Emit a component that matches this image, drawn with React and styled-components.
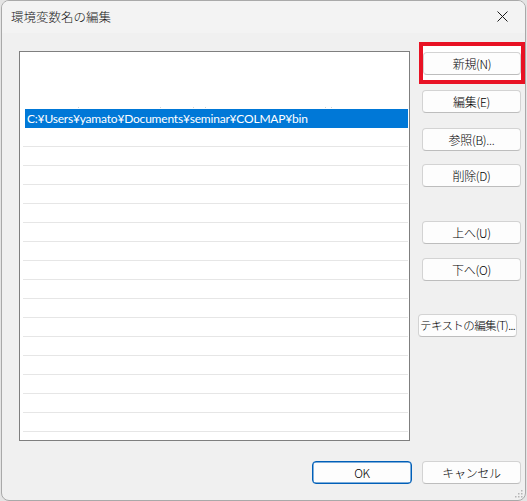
import styled, { createGlobalStyle } from 'styled-components'

const GlobalStyle = createGlobalStyle`
  html, body {
    margin: 0;
    padding: 0;
    background: #e4e4e4;
  }
  body {
    font-family: 'Noto Sans CJK JP', 'Noto Sans', sans-serif;
    font-size: 12px;
    color: #1a1a1a;
  }
`

const Window = styled.div`
  box-sizing: border-box;
  width: 525px;
  height: 501px;
  margin-left: 1px;
  border: 1px solid #a9a9a9;
  border-radius: 8px;
  background: #f0f0f0;
  overflow: hidden;
  display: flex;
  flex-direction: column;
  position: relative;
`

const TitleBar = styled.div`
  height: 31px;
  display: flex;
  align-items: center;
  justify-content: space-between;
  padding: 0 9px 1px 9px;
  background: #f3f3f3;
`

const Title = styled.span`
  font-size: 12.5px;
  font-weight: 300;
  color: #1a1a1a;
`

const CloseButton = styled.div`
  width: 20px;
  height: 20px;
  display: flex;
  align-items: center;
  justify-content: center;
  margin-right: 4px;
`

const Body = styled.div`
  flex: 1;
  display: flex;
  flex-direction: column;
  padding: 18px 0 0 17px;
`

const Main = styled.div`
  display: flex;
  gap: 12px;
`

const ListBox = styled.div`
  box-sizing: border-box;
  width: 392px;
  height: 390px;
  border: 1px solid #7f7f7f;
  background: #ffffff;
  overflow: hidden;
  display: flex;
  flex-direction: column;
`

const Spacer = styled.div`
  height: ${(p) => p.h}px;
  flex: none;
  position: relative;
`

const Speck = styled.span`
  position: absolute;
  bottom: 1px;
  width: 1px;
  height: 1px;
  background: #d4d4d4;
`

const Row = styled.div`
  box-sizing: border-box;
  flex: none;
  height: 19px;
  margin: 0 1px 0 ${(p) => (p.selected ? 5 : 3)}px;
  padding-left: 2px;
  display: flex;
  align-items: center;
  font-family: Lato, 'Noto Sans CJK JP', sans-serif;
  font-size: 12px;
  letter-spacing: -0.2px;
  white-space: nowrap;
  color: ${(p) => (p.selected ? '#ffffff' : '#1a1a1a')};
  background: ${(p) => (p.selected ? '#0078d7' : 'transparent')};
  border-bottom: 1px solid ${(p) => (p.selected ? '#0078d7' : '#e6e6e6')};
`

const Buttons = styled.div`
  display: flex;
  flex-direction: column;
  align-items: flex-start;
  padding-top: 1px;
`

const Button = styled.button`
  box-sizing: border-box;
  width: ${(p) => p.w || 99}px;
  height: 23px;
  padding: 0;
  margin-top: ${(p) => p.mt || 0}px;
  margin-left: ${(p) => p.ml || 0}px;
  border: 1px solid ${(p) => (p.primary ? '#005fb8' : '#d3d3d3')};
  border-bottom-color: ${(p) => (p.primary ? '#005fb8' : '#bdbdbd')};
  border-radius: 4px;
  background: #fdfdfd;
  font-family: 'Noto Sans CJK JP', 'Noto Sans', sans-serif;
  font-size: ${(p) => (p.tight ? 11.5 : 12)}px;
  font-weight: 300;
  letter-spacing: ${(p) => (p.tight ? -0.6 : -0.3)}px;
  white-space: nowrap;
  color: #000000;
  display: flex;
  align-items: center;
  justify-content: center;
  line-height: 1;
  box-shadow: ${(p) => (p.primary ? 'inset 0 0 0 0.5px #005fb8' : 'none')};
`

const Highlight = styled.div`
  box-sizing: border-box;
  width: 106px;
  height: 42px;
  margin: -10px 0 -10px -3px;
  padding: 6px 0 0 0;
  border: 4px solid #e81224;
  background: #ffffff;
`

const Footer = styled.div`
  display: flex;
  justify-content: flex-end;
  gap: 10px;
  padding: 20px 4px 0 0;
`

const Grip = styled.svg`
  position: absolute;
  right: 2px;
  bottom: 2px;
`

const App = () => {
  const emptyRows = Array.from({ length: 17 })
  const specks = [58, 140, 173, 185, 305, 311]

  return (
    <>
      <GlobalStyle />
      <Window>
        <TitleBar>
          <Title>環境変数名の編集</Title>
          <CloseButton>
            <svg width="11" height="11" viewBox="0 0 11 11">
              <path d="M0.5 0.5 L10.5 10.5 M10.5 0.5 L0.5 10.5" stroke="#1a1a1a" strokeWidth="1" />
            </svg>
          </CloseButton>
        </TitleBar>
        <Body>
          <Main>
            <ListBox>
              <Spacer h={57}>
                {specks.map((x) => (
                  <Speck key={x} style={{ left: x }} />
                ))}
              </Spacer>
              <Row selected>C:¥Users¥yamato¥Documents¥seminar¥COLMAP¥bin</Row>
              {emptyRows.map((_, i) => (
                <Row key={i} />
              ))}
            </ListBox>
            <Buttons>
              <Highlight>
                <Button w={98}>新規(N)</Button>
              </Highlight>
              <Button mt={16}>編集(E)</Button>
              <Button mt={15}>参照(B)...</Button>
              <Button mt={13}>削除(D)</Button>
              <Button mt={34}>上へ(U)</Button>
              <Button mt={14}>下へ(O)</Button>
              <Button mt={33} ml={-4} tight>テキストの編集(T)...</Button>
            </Buttons>
          </Main>
          <Footer>
            <Button primary w={100}>OK</Button>
            <Button>キャンセル</Button>
          </Footer>
        </Body>
        <Grip width="9" height="9" viewBox="0 0 9 9">
          {[
            [7, 1],
            [7, 4],
            [4, 4],
            [7, 7],
            [4, 7],
            [1, 7],
          ].map(([x, y]) => (
            <rect key={`${x}-${y}`} x={x} y={y} width="1.5" height="1.5" fill="#b5b5b5" />
          ))}
        </Grip>
      </Window>
    </>
  )
}

export default App
